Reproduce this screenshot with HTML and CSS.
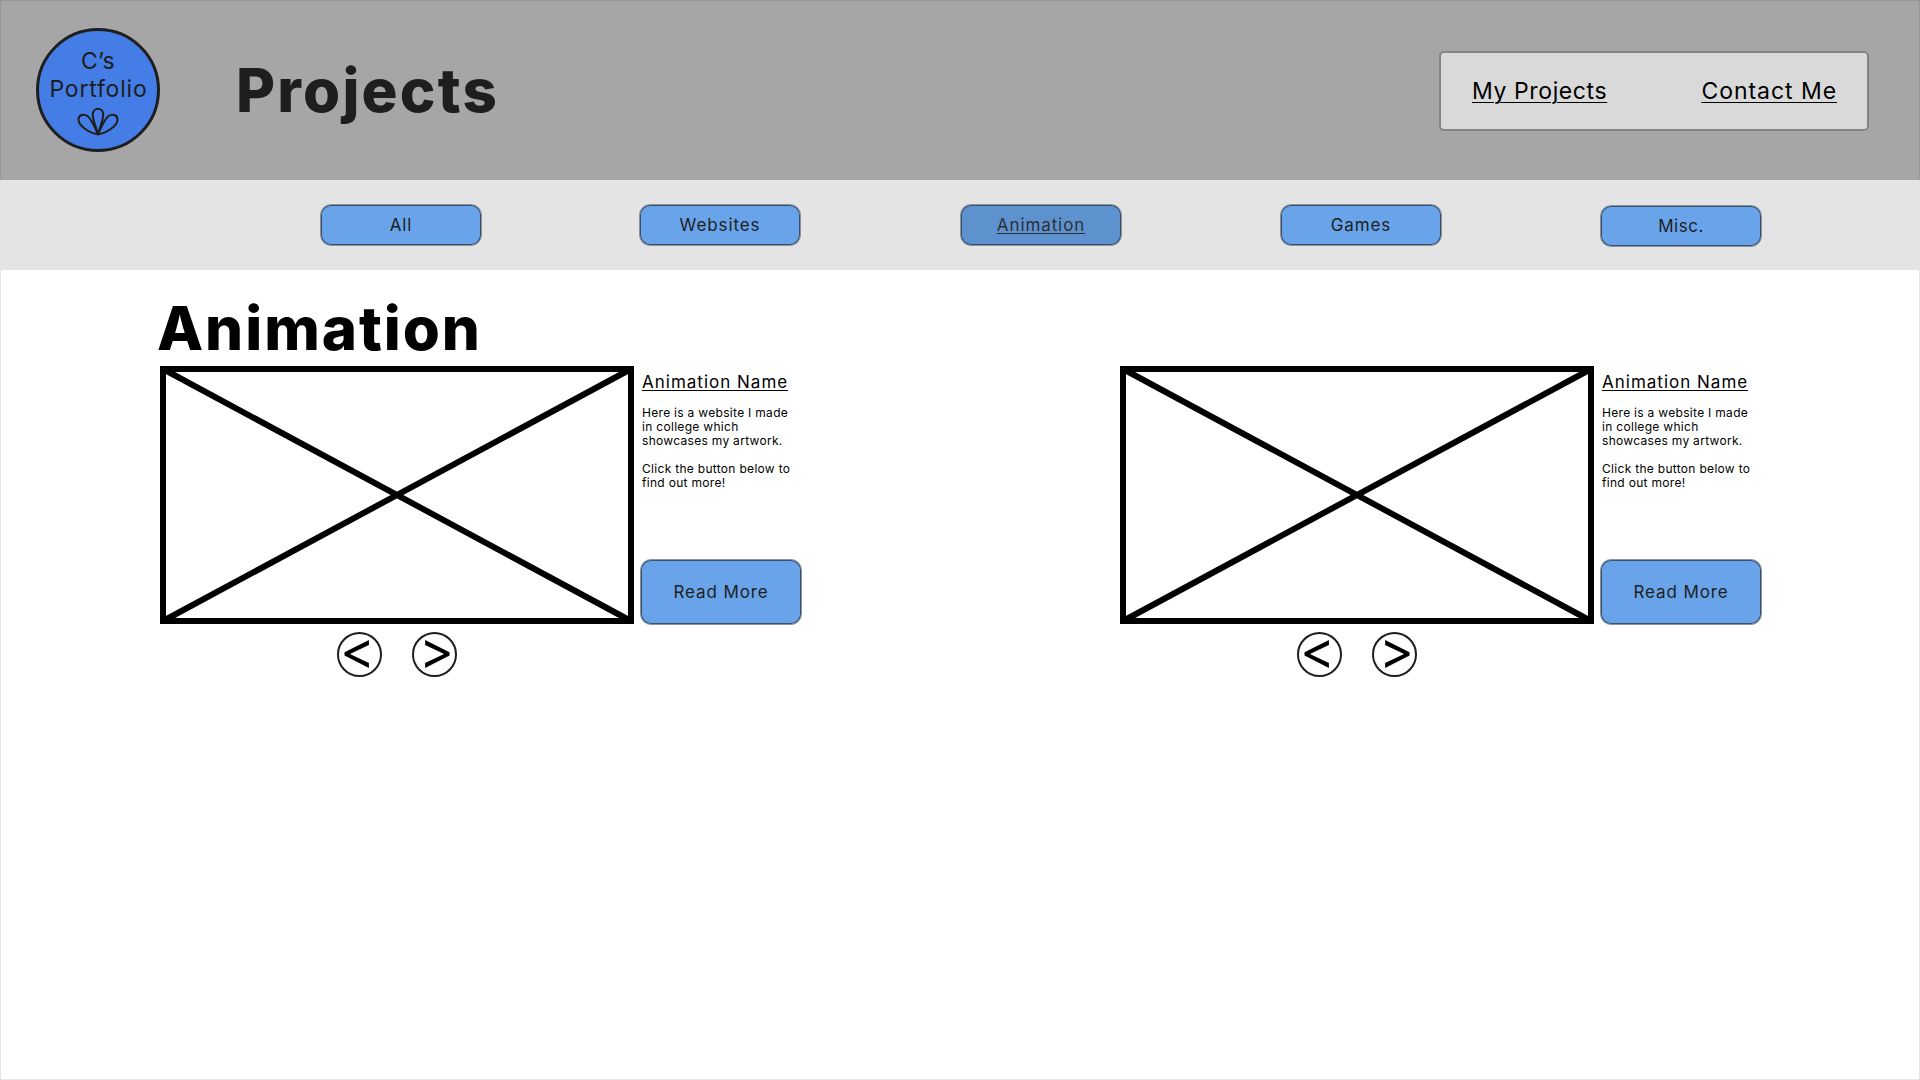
FILE: index.html
```html
<!DOCTYPE html>
<html lang="en">
<head>
  <meta charset="utf-8">
  <title>Projects – Animation</title>
  <link rel="stylesheet" href="styles.css">
</head>
<body>
  <header class="header">
    <a class="logo">
      <span class="logo-name">C’s</span>
      <span class="logo-word">Portfolio</span>
      <svg class="logo-flower" width="44" height="30" viewBox="0 0 44 30">
        <path d="M22 28.3C20.500 22 16.800 15 16.800 8.500C16.800 .8 27.200 .8 27.200 8.500C27.200 15 23.500 22 22 28.300Z"/>
        <path d="M22 28.300C14 27.500 2.500 20 2.500 13.500C2.500 9 8 7.300 11.500 10C16 13.500 19 22 22 28.300Z"/>
        <path d="M22 28.300C30 27.500 41.500 20 41.500 13.500C41.500 9 36 7.300 32.500 10C28 13.500 25 22 22 28.300Z"/>
      </svg>
    </a>
    <h1 class="title">Projects</h1>
    <nav class="main-nav">
      <a class="nav-projects">My Projects</a>
      <a class="nav-contact">Contact Me</a>
    </nav>
  </header>
  <nav class="filters">
    <a class="button chip">All</a>
    <a class="button chip">Websites</a>
    <a class="button chip chip-active"><span>Animation</span></a>
    <a class="button chip">Games</a>
    <a class="button chip chip-last">Misc.</a>
  </nav>
  <main class="content">
    <h2 class="section-title">Animation</h2>
    <div class="projects">
      <article class="project">
        <div class="media">
          <svg class="placeholder" width="474" height="258" viewBox="0 0 474 258">
            <path d="M3 3H471V255H3ZM3 3L471 255M3 255L471 3"/>
          </svg>
          <div class="arrows">
            <a class="arrow arrow-prev">&lt;</a>
            <a class="arrow arrow-next">&gt;</a>
          </div>
        </div>
        <div class="info">
          <h3 class="name"><span>Animation Name</span></h3>
          <p class="text">Here is a website I made<br>in college which<br>showcases my artwork.</p>
          <p class="text">Click the button below to<br>find out more!</p>
          <a class="button read-more">Read More</a>
        </div>
      </article>
      <article class="project">
        <div class="media">
          <svg class="placeholder" width="474" height="258" viewBox="0 0 474 258">
            <path d="M3 3H471V255H3ZM3 3L471 255M3 255L471 3"/>
          </svg>
          <div class="arrows">
            <a class="arrow arrow-prev">&lt;</a>
            <a class="arrow arrow-next">&gt;</a>
          </div>
        </div>
        <div class="info">
          <h3 class="name"><span>Animation Name</span></h3>
          <p class="text">Here is a website I made<br>in college which<br>showcases my artwork.</p>
          <p class="text">Click the button below to<br>find out more!</p>
          <a class="button read-more">Read More</a>
        </div>
      </article>
    </div>
  </main>
</body>
</html>
```
FILE: styles.css
```css
* {
  box-sizing: border-box;
}

body {
  margin: 0;
  height: 1080px;
  display: flex;
  flex-direction: column;
  background: #fff;
  color: #000;
  font-family: "Inter", "Liberation Sans", sans-serif;
}

h1, h2, h3, p {
  margin: 0;
}

/* Header */
.header {
  display: flex;
  align-items: center;
  height: 180px;
  padding: 0 50px 1px 35px;
  border: 1px solid #979797;
  border-bottom: 0;
  background: #a6a6a6;
}

.logo {
  display: flex;
  flex-direction: column;
  align-items: center;
  width: 124px;
  height: 124px;
  padding-top: 16px;
  border: 3px solid #1e1e1e;
  border-radius: 50%;
  background: #447de6;
  color: #1e1e1e;
  font-size: 23px;
  line-height: 28px;
}

.logo-name {
  letter-spacing: 0.3px;
}

.logo-word {
  letter-spacing: 0.8px;
  margin-right: -1px;
}

.logo-flower {
  margin-top: 3px;
}

.logo-flower path {
  fill: none;
  stroke: #1e1e1e;
  stroke-width: 2;
  stroke-linejoin: round;
}

.title {
  margin-left: 76px;
  color: #1e1e1e;
  font-size: 60px;
  font-weight: 800;
  line-height: 72px;
  letter-spacing: 2.2px;
}

.main-nav {
  display: flex;
  justify-content: space-between;
  width: 430px;
  height: 80px;
  margin: 2px 0 0 auto;
  padding: 0 30px 0 31px;
  border: 2px solid #848484;
  border-radius: 5px;
  background: #d9d9d9;
  font-size: 23px;
  line-height: 76px;
  text-decoration: underline;
  text-decoration-thickness: 1px;
  text-underline-offset: 3px;
}

.nav-projects {
  letter-spacing: 0.6px;
}

.nav-contact {
  letter-spacing: 0.95px;
}

/* Category filters */
.filters {
  display: grid;
  grid-template-columns: 319px 321px 320px 320px 162px;
  align-items: center;
  height: 90px;
  padding-left: 320px;
  background: #e4e4e4;
}

.button {
  display: flex;
  align-items: center;
  justify-content: center;
  width: 162px;
  border: 1px solid #8f9194;
  border-radius: 11px;
  box-shadow: inset 0 0 0 1px #36506f;
  background: #69a4ea;
  color: #1e1e1e;
  font-size: 17px;
  letter-spacing: 0.9px;
}

.chip {
  height: 42px;
}

.chip-active {
  background: #5e92cf;
  color: #2b3036;
}

.chip-active span,
.name span {
  text-decoration: underline;
  text-decoration-thickness: 1px;
  text-underline-offset: 2px;
}

.chip-last {
  margin-top: 2px;
  letter-spacing: 0.5px;
}

/* Projects */
.content {
  flex: 1;
  padding: 21px 159px 0;
  border: 1px solid #e6e6e6;
  border-top: 0;
}

.section-title {
  margin: 0 0 1px -3px;
  font-size: 60px;
  font-weight: 800;
  line-height: 74px;
  letter-spacing: 1.95px;
}

.projects {
  display: grid;
  grid-template-columns: 960px 642px;
}

.project {
  display: flex;
  gap: 6px;
}

.media {
  width: 474px;
}

.placeholder {
  display: block;
}

.placeholder path {
  fill: none;
  stroke: #000;
  stroke-width: 6;
}

.arrows {
  display: flex;
  gap: 30px;
  margin: 8px 0 0 177px;
}

.arrow {
  display: flex;
  align-items: center;
  justify-content: center;
  width: 45px;
  height: 45px;
  padding-bottom: 8px;
  border: 2px solid #1e1e1e;
  border-radius: 50%;
  font-size: 53px;
  line-height: 41px;
}

.arrow-prev {
  padding-right: 4px;
}

.arrow-next {
  padding-left: 4px;
}

.info {
  display: flex;
  flex-direction: column;
  height: 259px;
}

.name {
  padding: 6px 0 13px 2px;
  font-size: 17px;
  font-weight: 400;
  line-height: 21px;
  letter-spacing: 1px;
}

.text {
  margin-bottom: 14px;
  padding-left: 2px;
  font-size: 12px;
  line-height: 14px;
  letter-spacing: 0.3px;
}

.read-more {
  height: 66px;
  margin-top: auto;
}
```
